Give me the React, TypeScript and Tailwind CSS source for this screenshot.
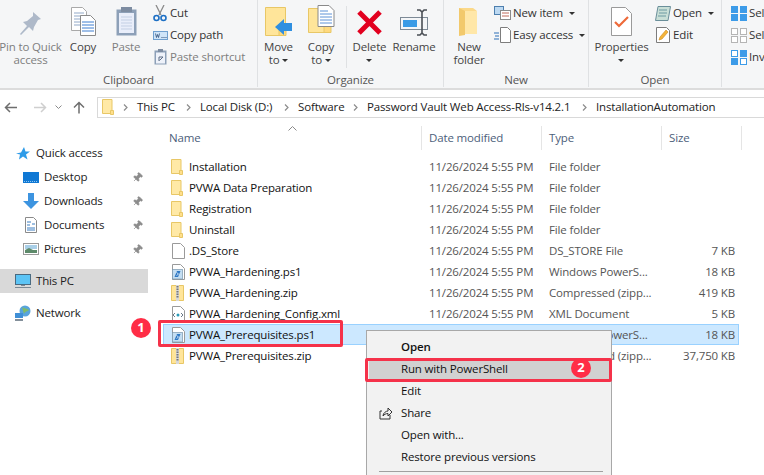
import React from 'react';
import { Pin } from 'lucide-react';

const FONT = "font-['Open_Sans','Noto_Sans',sans-serif] tracking-[-0.15px]";

// Ribbon icons
const FolderPortrait = ({ className = '' }: { className?: string }) => (
    <svg className={className} viewBox="0 0 12 16">
        <path d="M.5.5h9.5v14H.5z" fill="#ffe9a6" stroke="#e8c766" />
        <path d="M8.5 11.5h3v4h-3z" fill="#ffdf8c" stroke="#e8c766" />
    </svg>
);

const PinIcon = () => (
    <svg width="24" height="26" viewBox="0 0 24 26">
        <path d="M14 2l8 7-3 1-4 7-1 4-4-4-8 8-1-1 7-8-4-4 4-1 6-5z" fill="#aeb9c9" />
    </svg>
);

const CopyIcon = () => (
    <svg width="25" height="29" viewBox="0 0 25 29">
        <path d="M.5.5h11l4 4v19H.5z" fill="#fff" stroke="#a9a9a9" />
        <path d="M3 6h10M3 9h10M3 12h10M3 15h10M3 18h10" stroke="#92a9c8" />
        <path d="M9.500 8.500h10l5 5v15h-15z" fill="#fff" stroke="#8a8a8a" />
        <path d="M11 15h12M11 18h12M11 21h12M11 24h12" stroke="#3f7fd0" />
    </svg>
);

const PasteIcon = () => (
    <svg width="21" height="30" viewBox="0 0 21 30">
        <rect x=".5" y="3.500" width="20" height="26" fill="#8da0b8" />
        <rect x="3" y="7" width="15" height="20" fill="#e9eefa" />
        <path d="M5 11h11M5 14h11M5 17h11M5 20h11M5 23h11" stroke="#c3cfe4" />
        <rect x="5" y="1" width="11" height="5" fill="#7d8ca1" />
    </svg>
);

const CutIcon = () => (
    <svg width="14" height="17" viewBox="0 0 14 17">
        <path d="M3 0l5 10M11 0L6 10" stroke="#8a8a8a" strokeWidth="1.3" fill="none" />
        <circle cx="3.500" cy="13" r="2.500" fill="none" stroke="#1d6fc4" strokeWidth="1.600" />
        <circle cx="10.500" cy="13" r="2.500" fill="none" stroke="#1d6fc4" strokeWidth="1.600" />
    </svg>
);

const CopyPathIcon = () => (
    <svg width="15" height="9" viewBox="0 0 15 9">
        <rect x=".5" y=".5" width="14" height="8" fill="#cfe4f8" stroke="#6f9fcf" />
        <path d="M2.500 2.500l1 4 1-3 1 3 1-4" fill="none" stroke="#30507a" strokeWidth=".8" />
        <path d="M8.500 6.500h1M10.500 6.500h1M12.500 6.500h1" stroke="#30507a" />
    </svg>
);

const PasteShortcutIcon = () => (
    <svg width="13" height="16" viewBox="0 0 13 16">
        <rect x=".5" y="1.500" width="12" height="14" fill="#8da0b8" />
        <rect x="2" y="3.500" width="9" height="11" fill="#eef2fa" />
        <rect x="4" y="0" width="5" height="3" fill="#7d8ca1" />
        <path d="M5 12V8h4M5.500 11.500L9 8" stroke="#5c6d85" fill="none" />
    </svg>
);

const MoveToIcon = () => (
    <svg width="27" height="29" viewBox="0 0 27 29">
        <path d="M.5.5h20v28H.5z" fill="#ffe59a" stroke="#e8c766" />
        <path d="M14 22.500h7v6h-7z" fill="#ffd97e" stroke="#e8c766" />
        <path d="M10 20l9-8v4h8v8h-8v4z" fill="#2f8fe0" />
    </svg>
);

const CopyToIcon = () => (
    <svg width="27" height="31" viewBox="0 0 27 31">
        <path d="M.5 3.500h22v24H.5z" fill="#ffe59a" stroke="#e8c766" />
        <path d="M16 21.500h7v6h-7z" fill="#ffd97e" stroke="#e8c766" />
        <path d="M10 .5h11l5 5v16H10z" fill="#fff" stroke="#8a8a8a" />
        <path d="M12 6h8M12 9h12M12 12h12M12 15h12M12 18h12" stroke="#5f92d6" />
    </svg>
);

const DeleteIcon = () => (
    <svg width="27" height="27" viewBox="0 0 27 27">
        <path d="M3 3l21 21M24 3L3 24" stroke="#e2001f" strokeWidth="5" />
    </svg>
);

const RenameIcon = () => (
    <svg width="29" height="27" viewBox="0 0 29 27">
        <rect x=".5" y="8.500" width="27" height="12" fill="#f4f6f8" stroke="#7d8a96" />
        <rect x="3" y="11" width="14" height="7" fill="#3a9be6" />
        <path d="M17 1h3l2 2 2-2h3M17 26h3l2-2 2 2h3M22 3v21" stroke="#4a4f55" strokeWidth="1.600" fill="none" />
    </svg>
);

const NewFolderIcon = () => (
    <svg width="20" height="28" viewBox="0 0 20 28">
        <path d="M0 0h14l4 3v23H6L0 27z" fill="#fbd98a" />
        <path d="M0 0l6 3v24l-6 1z" fill="#f2c96c" />
        <path d="M6 3h12v23H6z" fill="#ffe7a8" />
    </svg>
);

const NewItemIcon = () => (
    <svg width="17" height="14" viewBox="0 0 17 14">
        <rect x=".5" y=".5" width="9" height="8" fill="#bcd9f2" stroke="#4d7fae" />
        <rect x="6.500" y="4.500" width="10" height="9" fill="#fff" stroke="#8a8a8a" />
        <path d="M8 7h7M8 10h7" stroke="#c26b5a" />
    </svg>
);

const EasyAccessIcon = () => (
    <svg width="17" height="16" viewBox="0 0 17 16">
        <path d="M6.500.5h7l3 3v12h-10z" fill="#fff" stroke="#7d7d7d" />
        <path d="M0 6h5M1 9h4M0 12h5" stroke="#2d6fb8" strokeWidth="1.200" />
    </svg>
);

const PropertiesIcon = () => (
    <svg width="21" height="29" viewBox="0 0 21 29">
        <path d="M.5.5h14l6 6v22H.5z" fill="#fff" stroke="#9a9a9a" />
        <path d="M4 15l4 4 9-9" stroke="#ee6a3a" strokeWidth="2.200" fill="none" />
    </svg>
);

const OpenIcon = () => (
    <svg width="16" height="15" viewBox="0 0 16 15">
        <path d="M3 .5h12.500L13 14.500H.5z" fill="#c9dfd7" stroke="#6a8f9a" />
        <path d="M4 4h8M4 7h8M3 10h8" stroke="#6d9aa2" />
    </svg>
);

const EditIcon = () => (
    <svg width="14" height="16" viewBox="0 0 14 16">
        <path d="M.5.5h10l3 3v12H.5z" fill="#fff" stroke="#7d7d7d" />
        <path d="M3 13l1-3 6-7 2 2-6 7z" fill="#f4b43a" stroke="#c98a1e" strokeWidth=".6" />
    </svg>
);

const SelectIcon = ({ filled, muted }: { filled: boolean[]; muted?: boolean }) => {
    const spots = [[0, 0], [9, 0], [0, 8], [9, 8]];
    return (
        <svg width="16" height="15" viewBox="0 0 16 15">
            {spots.map(([x, y], i) => (
                <rect
                    key={i}
                    x={x + 0.5}
                    y={y + 0.5}
                    width="6"
                    height="6"
                    fill={filled[i] ? '#3c9be8' : '#fff'}
                    stroke={muted ? '#b5b5b5' : '#3c9be8'}
                />
            ))}
        </svg>
    );
};

const Caret = () => <span className="inline-block align-middle w-0 h-0 border-x-[3px] border-x-transparent border-t-[3px] border-t-[#333]" />;

const SmallAction = ({ icon, label, muted, caret, iconW = 'w-[16px]' }: { icon: React.ReactNode; label: string; muted?: boolean; caret?: boolean; iconW?: string }) => (
    <div className={`h-[22px] flex items-center gap-[2px] whitespace-nowrap ${muted ? 'text-[#7e7e7e]' : 'text-[#333]'}`}>
        <div className={`${iconW} flex justify-center shrink-0`}>{icon}</div>
        <span>{label}</span>
        {caret && <span className="ml-[4px] flex"><Caret /></span>}
    </div>
);

const BigAction = ({ icon, lines, width, muted }: { icon: React.ReactNode; lines: React.ReactNode[]; width: string; muted?: boolean }) => (
    <div className={`${width} flex flex-col items-center shrink-0 ${muted ? 'text-[#7e7e7e]' : 'text-[#444]'}`}>
        <div className="h-[36px] flex items-end justify-center">{icon}</div>
        <div className="mt-[4px] text-center leading-[13px] whitespace-nowrap">
            {lines.map((l, i) => <div key={i}>{l}</div>)}
        </div>
    </div>
);

const RibbonGroup = ({ label, width, children }: { label: string; width: string; children: React.ReactNode }) => (
    <div className={`${width} shrink-0 h-[87px] flex flex-col border-r border-[#dfe1e3]`}>
        <div className="flex-1 flex">{children}</div>
        <div className="text-center text-[#555] leading-[14px]">{label}</div>
    </div>
);

const Ribbon = () => (
    <div className="h-[90px] bg-[#f5f6f7] border-b-2 border-[#dcdcdc] flex overflow-hidden text-[11.5px] shrink-0">
        <RibbonGroup label="Clipboard" width="w-[258px]">
            <BigAction width="w-[61px]" muted icon={<PinIcon />} lines={['Pin to Quick', 'access']} />
            <BigAction width="w-[44px]" icon={<CopyIcon />} lines={['Copy']} />
            <BigAction width="w-[42px]" muted icon={<PasteIcon />} lines={['Paste']} />
            <div className="ml-[5px] pt-[2px]">
                <SmallAction icon={<CutIcon />} label="Cut" />
                <SmallAction icon={<CopyPathIcon />} label="Copy path" />
                <SmallAction muted icon={<PasteShortcutIcon />} label="Paste shortcut" />
            </div>
        </RibbonGroup>
        <RibbonGroup label="Organize" width="w-[186px]">
            <BigAction width="w-[41px]" icon={<MoveToIcon />} lines={['Move', <>to <Caret /></>]} />
            <BigAction width="w-[44px]" icon={<CopyToIcon />} lines={['Copy', <>to <Caret /></>]} />
            <div className="w-[1px] h-[62px] bg-[#dfe1e3] mt-[6px] ml-[3px]" />
            <BigAction width="w-[45px]" icon={<DeleteIcon />} lines={['Delete', <Caret />]} />
            <BigAction width="w-[44px]" icon={<RenameIcon />} lines={['Rename']} />
        </RibbonGroup>
        <RibbonGroup label="New" width="w-[145px]">
            <BigAction width="w-[50px]" icon={<NewFolderIcon />} lines={['New', 'folder']} />
            <div className="pt-[2px]">
                <SmallAction iconW="w-[17px]" icon={<NewItemIcon />} label="New item" caret />
                <SmallAction iconW="w-[17px]" icon={<EasyAccessIcon />} label="Easy access" caret />
            </div>
        </RibbonGroup>
        <RibbonGroup label="Open" width="w-[133px]">
            <BigAction width="w-[65px]" icon={<PropertiesIcon />} lines={['Properties', <Caret />]} />
            <div className="pt-[2px] pl-[1px]">
                <SmallAction icon={<OpenIcon />} label="Open" caret />
                <SmallAction icon={<EditIcon />} label="Edit" />
            </div>
        </RibbonGroup>
        <div className="pl-[9px] pt-[2px]">
            <SmallAction icon={<SelectIcon filled={[true, true, true, true]} />} label="Select all" />
            <SmallAction icon={<SelectIcon muted filled={[false, false, false, false]} />} label="Select none" />
            <SmallAction icon={<SelectIcon filled={[false, true, true, false]} />} label="Invert selection" />
        </div>
    </div>
);

const Chevron = () => (
    <svg width="5" height="7" viewBox="0 0 5 7" className="shrink-0">
        <path d="M1 .5l3 3-3 3" fill="none" stroke="#8c8c8c" strokeWidth="1.200" />
    </svg>
);

const crumbs = [
    { label: 'This PC', width: 'w-[58px]' },
    { label: 'Local Disk (D:)', width: 'w-[93px]' },
    { label: 'Software', width: 'w-[64px]' },
    { label: 'Password Vault Web Access-Rls-v14.2.1', width: 'w-[224px]' },
    { label: 'InstallationAutomation', width: 'w-[140px]' },
];

const AddressBar = () => (
    <div className="h-[29px] pt-[5px] flex items-center shrink-0 text-[11.5px] text-[#222]">
        <div className="w-[97px] h-full flex items-center shrink-0">
            <svg width="14" height="11" viewBox="0 0 14 11" className="ml-[4px]"><path d="M13 5.500H2M6 1L1.500 5.500 6 10" fill="none" stroke="#6e6e6e" strokeWidth="1.500" /></svg>
            <svg width="14" height="11" viewBox="0 0 14 11" className="ml-[15px]"><path d="M1 5.500h11M8 1l4.500 4.500L8 10" fill="none" stroke="#cfcfcf" strokeWidth="1.500" /></svg>
            <svg width="7" height="4" viewBox="0 0 7 4" className="ml-[8px]"><path d="M.5.5l3 3 3-3" fill="none" stroke="#8a8a8a" /></svg>
            <svg width="12" height="13" viewBox="0 0 12 13" className="ml-[11px]"><path d="M6 12.500V1.500M1 6.500l5-5 5 5" fill="none" stroke="#6e6e6e" strokeWidth="1.500" /></svg>
        </div>
        <div className="flex-1 h-[21px] border border-[#d9d9d9] border-r-0 flex items-center pl-[4px]">
            <FolderPortrait className="w-[12px] h-[16px] shrink-0" />
            <div className="w-[9px] shrink-0" />
            {crumbs.map(c => (
                <div key={c.label} className="flex items-center shrink-0">
                    <Chevron />
                    <span className={`${c.width} pl-[9px] pb-[1px] whitespace-nowrap`}>{c.label}</span>
                </div>
            ))}
        </div>
    </div>
);

const navIcon = {
    quick: (
        <svg width="14" height="13" viewBox="0 0 14 13"><path d="M8 0l1.500 4.500H14L10 7.500l1.500 5L7 9.500 3 12.500l1-5-4-1 5-1z" fill="#2d9be8" /></svg>
    ),
    desktop: (
        <svg width="16" height="11" viewBox="0 0 16 11"><rect width="16" height="11" fill="#0f78d4" /><path d="M1 9.500h14" stroke="#8fc7f2" strokeDasharray="1 1" /></svg>
    ),
    downloads: (
        <svg width="16" height="16" viewBox="0 0 16 16"><path d="M5 0h6v8h5l-8 8-8-8h5z" fill="#3d94e0" /></svg>
    ),
    documents: (
        <svg width="12" height="16" viewBox="0 0 12 16"><path d="M.5.5h8l3 3v12H.5z" fill="#fff" stroke="#8a8a8a" /><path d="M2 5h4M7 7h3M2 8h3M2 11h8M2 13h8" stroke="#3d7fc2" /></svg>
    ),
    pictures: (
        <svg width="16" height="12" viewBox="0 0 16 12"><rect x=".5" y=".5" width="15" height="11" fill="#fff" stroke="#9a9a9a" /><rect x="2" y="2" width="12" height="4" fill="#a9cfe8" /><path d="M2 10V7l4-2 4 2 4 0v3z" fill="#5d8a6a" /></svg>
    ),
    pc: (
        <svg width="16" height="15" viewBox="0 0 16 15"><rect x=".5" y=".5" width="15" height="10" fill="#5cc4f5" stroke="#4a6a80" /><path d="M0 13.500h16M6 11.500h4" stroke="#7a8a96" strokeWidth="1.200" /></svg>
    ),
    network: (
        <svg width="16" height="16" viewBox="0 0 16 16"><circle cx="10" cy="6" r="5.500" fill="#58a4dc" /><path d="M7 2c2 2 5 1 7 3-2 2-4 1-5 4z" fill="#7fbb6a" /><rect x="0" y="8" width="8" height="5" fill="#3f8fd6" /><path d="M0 15h8" stroke="#5a6a78" strokeWidth="1.500" /></svg>
    ),
};

const SideItem = ({ icon, label, pinned, indent, active }: { icon: React.ReactNode; label: string; pinned?: boolean; indent?: boolean; active?: boolean }) => (
    <div className={`h-[24px] flex items-center ${active ? 'bg-[#d9d9d9]' : ''} ${indent ? 'pl-[23px]' : 'pl-[15px]'}`}>
        <div className="w-[16px] flex justify-center shrink-0">{icon}</div>
        <span className="ml-[5px] whitespace-nowrap">{label}</span>
        {pinned && (
            <Pin className="ml-auto mr-[5px] w-[11px] h-[11px] text-[#8c8c8c] fill-[#8c8c8c] rotate-45" strokeWidth={1.500} />
        )}
    </div>
);

const Sidebar = () => (
    <div className="w-[148px] shrink-0 pt-[22px] text-[11.5px] text-[#222]">
        <SideItem icon={navIcon.quick} label="Quick access" />
        <SideItem indent pinned icon={navIcon.desktop} label="Desktop" />
        <SideItem indent pinned icon={navIcon.downloads} label="Downloads" />
        <SideItem indent pinned icon={navIcon.documents} label="Documents" />
        <SideItem indent pinned icon={navIcon.pictures} label="Pictures" />
        <div className="h-[8px]" />
        <SideItem active icon={navIcon.pc} label="This PC" />
        <div className="h-[8px]" />
        <SideItem icon={navIcon.network} label="Network" />
    </div>
);

type Kind = 'folder' | 'blank' | 'ps1' | 'zip' | 'xml';

const FileIcon = ({ kind }: { kind: Kind }) => {
    if (kind === 'folder') return <FolderPortrait className="w-[12px] h-[16px]" />;
    if (kind === 'zip') {
        return (
            <svg width="13" height="16" viewBox="0 0 13 16">
                <path d="M.5.5h12v15H.5z" fill="#ffe59a" stroke="#e8c766" />
                <path d="M5 0h3v16H5z" fill="#d8d8d8" />
                <path d="M6.500 1v12" stroke="#777" strokeDasharray="1.500 1" strokeWidth="2" />
            </svg>
        );
    }
    return (
        <svg width="14" height="16" viewBox="0 0 14 16">
            <path d="M1.500.5h8l4 4v11h-12z" fill="#fff" stroke="#9a9a9a" />
            {kind === 'ps1' && (
                <>
                    <rect x="1.500" y="5.500" width="10" height="9.500" fill="#c4def2" stroke="#7a97ae" strokeWidth=".7" />
                    <path d="M3.500 13l2.500-6h3.500L7 13z" fill="#2e78c4" />
                    <path d="M5.500 8.500l2 1.500-2 1.500" fill="none" stroke="#fff" strokeWidth=".7" />
                </>
            )}
            {kind === 'xml' && (
                <>
                    <path d="M4 7L2 9l2 2M10 7l2 2-2 2" stroke="#6a7a88" fill="none" />
                    <circle cx="7" cy="9" r="1.500" fill="#2a9bb8" />
                </>
            )}
        </svg>
    );
};

const DATE = '11/26/2024 5:55 PM';

const files: { name: string; kind: Kind; type: string; size: string; selected?: boolean }[] = [
    { name: 'Installation', kind: 'folder', type: 'File folder', size: '' },
    { name: 'PVWA Data Preparation', kind: 'folder', type: 'File folder', size: '' },
    { name: 'Registration', kind: 'folder', type: 'File folder', size: '' },
    { name: 'Uninstall', kind: 'folder', type: 'File folder', size: '' },
    { name: '.DS_Store', kind: 'blank', type: 'DS_STORE File', size: '7 KB' },
    { name: 'PVWA_Hardening.ps1', kind: 'ps1', type: 'Windows PowerS...', size: '18 KB' },
    { name: 'PVWA_Hardening.zip', kind: 'zip', type: 'Compressed (zipp...', size: '419 KB' },
    { name: 'PVWA_Hardening_Config.xml', kind: 'xml', type: 'XML Document', size: '5 KB' },
    { name: 'PVWA_Prerequisites.ps1', kind: 'ps1', type: 'Windows PowerS...', size: '18 KB', selected: true },
    { name: 'PVWA_Prerequisites.zip', kind: 'zip', type: 'Compressed (zipp...', size: '37,750 KB' },
];

const cols = [
    { label: 'Name', width: 'w-[259px]', pad: 'pl-[6px]' },
    { label: 'Date modified', width: 'w-[120px]', pad: 'pl-[7px]' },
    { label: 'Type', width: 'w-[120px]', pad: 'pl-[7px]' },
    { label: 'Size', width: 'w-[80px]', pad: 'pl-[7px]' },
];

const FileList = () => (
    <div className="flex-1 relative min-w-0 text-[11.5px]">
        <div className="h-[30px] pt-[7px] pl-[163px] ml-[-148px] flex">
            {cols.map(c => (
                <div key={c.label} className={`${c.width} ${c.pad} h-[24px] border-r border-[#e5e5e5] text-[#4c607a] flex items-center`}>
                    {c.label}
                </div>
            ))}
        </div>
        <svg width="9" height="5" viewBox="0 0 9 5" className="absolute left-[140px] top-[7px]"><path d="M.5 4.500l4-4 4 4" fill="none" stroke="#8a8a8a" /></svg>
        <div className="pt-[7px] pl-[15px] w-[591px]">
            {files.map(f => (
                <div key={f.name} className={`h-[21px] flex items-center text-[#333] border ${f.selected ? 'bg-[#cce8ff] border-[#99d1ff]' : 'border-transparent'}`}>
                    <div className="w-[25px] pl-[7px] shrink-0 flex"><FileIcon kind={f.kind} /></div>
                    <div className="w-[240px] shrink-0 text-[#111] whitespace-nowrap">{f.name}</div>
                    <div className="w-[120px] shrink-0 whitespace-nowrap text-[#555]">{DATE}</div>
                    <div className="w-[120px] shrink-0 whitespace-nowrap text-[#555]">{f.type}</div>
                    <div className="w-[66px] shrink-0 text-right text-[#555] whitespace-nowrap">{f.size}</div>
                </div>
            ))}
        </div>
    </div>
);

const menuItems = [
    { label: 'Open', bold: true },
    { label: 'Run with PowerShell', active: true },
    { label: 'Edit' },
    { label: 'Share', share: true },
    { label: 'Open with...' },
    { label: 'Restore previous versions' },
];

const ContextMenu = () => (
    <div className="absolute left-[366px] top-[330px] w-[246px] h-[145px] bg-[#f2f2f2] border border-[#a8a8a8] border-b-0 pt-[5px] px-[2px] text-[11.5px] text-[#111]">
        {menuItems.map(m => (
            <div key={m.label} className={`h-[22px] flex items-center ${m.active ? 'bg-[#d1d1d1]' : ''}`}>
                <div className="w-[32px] shrink-0 flex justify-center pl-[2px]">
                    {m.share && (
                        <svg width="14" height="13" viewBox="0 0 14 13">
                            <path d="M3 4H1v8h10V8M4 9c0-3 3-5 5-5V1l4 4-4 4V6.500C7 6.500 5 7.500 4 9z" fill="none" stroke="#333" />
                        </svg>
                    )}
                </div>
                <span className={m.bold ? 'font-semibold' : ''}>{m.label}</span>
            </div>
        ))}
        <div className="h-[1px] bg-[#a0a0a0] mt-[3px] ml-[10px] mr-[6px]" />
    </div>
);

const Badge = ({ n, className }: { n: number; className: string }) => (
    <div className={`absolute w-[20px] h-[20px] rounded-full bg-[#ff2d46] text-white text-[13px] font-bold flex items-center justify-center ${className}`}>{n}</div>
);

export default function App() {
    return (
        <div className={`relative w-[764px] h-[475px] overflow-hidden bg-white flex flex-col ${FONT}`}>
            <Ribbon />
            <AddressBar />
            <div className="flex-1 flex min-h-0">
                <Sidebar />
                <FileList />
            </div>
            <ContextMenu />
            <div className="absolute left-[158px] top-[320px] w-[185px] h-[27px] border-[3px] border-[#f5324a] rounded-[2px]" />
            <div className="absolute left-[365px] top-[358px] w-[247px] h-[24px] border-[3px] border-[#f5324a] rounded-[2px]" />
            <Badge n={1} className="left-[131px] top-[318px]" />
            <Badge n={2} className="left-[571px] top-[358px]" />
        </div>
    );
}
